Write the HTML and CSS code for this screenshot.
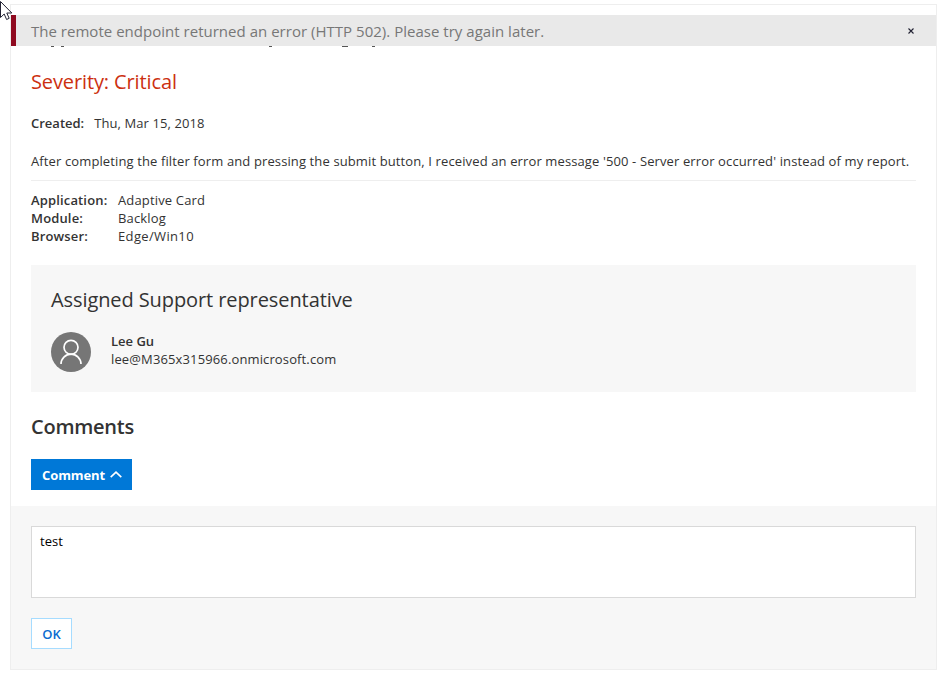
FILE: index.html
```html
<!DOCTYPE html>
<html lang="en">
<head>
<meta charset="utf-8">
<title>Support request</title>
<link rel="stylesheet" href="styles.css">
</head>
<body>
<main class="card">
  <div class="banner" role="alert">
    <span class="banner-text">The remote endpoint returned an error (HTTP 502). Please try again later.</span>
    <button class="close" aria-label="Close"><svg width="6" height="6" viewBox="0 0 6 6"><path d="M.5 .5 5.5 5.5M5.5 .5 .5 5.5"/></svg></button>
  </div>
  <div class="tails"><i></i><i></i><i></i><i></i><i></i></div>
  <section class="body">
    <h2 class="severity">Severity: Critical</h2>
    <div class="created"><b>Created:</b><span>Thu, Mar 15, 2018</span></div>
    <p class="message">After completing the filter form and pressing the submit button, I received an error message '500 - Server error occurred' instead of my report.</p>
    <dl class="facts">
      <dt>Application:</dt><dd>Adaptive Card</dd>
      <dt>Module:</dt><dd>Backlog</dd>
      <dt>Browser:</dt><dd>Edge/Win10</dd>
    </dl>
    <div class="assignee">
      <h2 class="assignee-title">Assigned Support representative</h2>
      <div class="person">
        <svg class="avatar" width="40" height="40" viewBox="0 0 40 40"><circle class="disc" cx="20" cy="20" r="20"/><circle class="line" cx="20" cy="15.3" r="7"/><path class="line" d="M10 32a10 9.8 0 0 1 20 0"/></svg>
        <div><div class="name">Lee Gu</div><div class="mail">lee@M365x315966.onmicrosoft.com</div></div>
      </div>
    </div>
    <h2 class="comments">Comments</h2>
    <button class="comment-btn"><span>Comment</span><svg width="12" height="7" viewBox="0 0 12 7"><path d="M.7 6.2 6 1.2l5.3 5"/></svg></button>
  </section>
  <section class="reply">
    <div class="input">test</div>
    <button class="ok">OK</button>
  </section>
</main>
<svg class="cursor" width="13" height="21" viewBox="0 0 13 21"><path d="M.5 1.5V17.5L4.2 14l2.4 5.5 2.6-1.2L6.8 13h5z"/></svg>
</body>
</html>
```
FILE: styles.css
```css
* { box-sizing: border-box; }
body { margin: 0; height: 676px; overflow: hidden; background: #fff; color: #333; font: 14px/18px "Open Sans", "Noto Sans", sans-serif; white-space: nowrap; }
h2, p, dl, dd { margin: 0; }
button { margin: 0; padding: 0; border: 0; background: none; font: inherit; }
svg { display: block; fill: none; }
.card { width: 927px; height: 666px; margin: 4px 0 0 10px; border: 1px solid #eee; display: flex; flex-direction: column; }
.banner { margin: 10px 0 0; height: 31px; flex: none; background: #e9e9e9; border-left: 5px solid #8f0a20; display: flex; align-items: center; justify-content: space-between; padding: 0 22px 0 15px; font-size: 15px; letter-spacing: .02px; color: #777; }
.close path { stroke: #223; stroke-width: 1.1; }
.tails { height: 1px; flex: none; display: flex; padding-left: 40px; }
.tails i { width: 3px; height: 1px; background: #555; margin-right: 7px; }
.tails i:nth-child(2) { margin-right: 205px; }
.tails i:nth-child(3) { margin-right: 70px; }
.tails i:nth-child(4) { width: 6px; margin-right: 24px; }
.body { height: 459px; flex: none; padding: 21px 20px 0; display: flex; flex-direction: column; }
.severity { font-size: 20px; line-height: 28px; font-weight: 400; letter-spacing: -.12px; color: #cc3010; }
.created { margin-top: 18px; display: flex; gap: 10px; font-size: 13px; }
.created span { letter-spacing: .09px; }
b, dt, .name { font-weight: 600; }
.message { margin-top: 20px; padding-bottom: 10px; border-bottom: 1px solid #eee; font-size: 13px; letter-spacing: .12px; }
.facts { margin-top: 10px; display: grid; grid-template-columns: 87px auto; font-size: 13px; letter-spacing: .15px; }
.facts dd:last-child { letter-spacing: .35px; }
.assignee { margin-top: 20px; height: 127px; background: #f7f7f7; padding: 21px 20px 20px; }
.assignee-title { font-size: 20px; line-height: 28px; font-weight: 400; letter-spacing: -.09px; }
.person { margin-top: 18px; display: flex; gap: 20px; font-size: 13px; }
.mail { letter-spacing: .13px; }
.disc { fill: #767676; }
.line { stroke: #fff; stroke-width: 1.7; }
.comments { margin-top: 21px; font-size: 20px; line-height: 28px; font-weight: 600; letter-spacing: -.25px; }
.comment-btn { margin-top: 18px; width: 101px; height: 31px; background: #0078d7; color: #fff; font-size: 13px; font-weight: 700; letter-spacing: -.1px; display: flex; align-items: center; padding: 0 10px 0 11px; justify-content: space-between; }
.comment-btn path { stroke: #fff; stroke-width: 1.6; }
.reply { flex: 1; background: #f7f7f7; padding: 20px 20px 0; }
.input { height: 72px; border: 1px solid #d9d9d9; background: #fff; padding: 5px 8px; font-size: 13px; color: #000; }
.ok { display: block; margin-top: 20px; width: 41px; height: 31px; border: 1px solid #a6dcff; background: #fff; color: #0b6cd0; font-size: 13px; font-weight: 600; }
.cursor { position: absolute; left: 0; top: 0; }
.cursor path { fill: #fff; stroke: #223; stroke-width: 1; }
```
